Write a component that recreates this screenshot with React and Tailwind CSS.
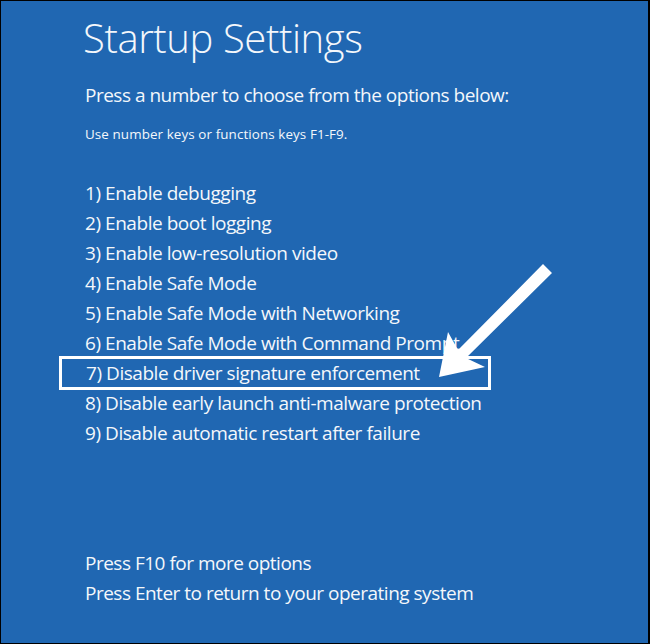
export default function App() {
  const items = [
    "1) Enable debugging",
    "2) Enable boot logging",
    "3) Enable low-resolution video",
    "4) Enable Safe Mode",
    "5) Enable Safe Mode with Networking",
    "6) Enable Safe Mode with Command Prompt",
    "7) Disable driver signature enforcement",
    "8) Disable early launch anti-malware protection",
    "9) Disable automatic restart after failure",
  ];
  return (
    <div
      className="relative w-[650px] h-[644px] bg-[#2067b2] border border-black border-r-2 text-[#f4f7fb] overflow-hidden"
      style={{ fontFamily: '"Open Sans", "Noto Sans", sans-serif' }}
    >
      <div className="flex flex-col pl-[84px]">
        <div className="mt-[13px] ml-[-2px] text-[40px] leading-[48px] font-light tracking-[-0.4px]">Startup Settings</div>
        <div className="mt-[18px] text-[19px] leading-[30px] tracking-[-0.5px]">Press a number to choose from the options below:</div>
        <div className="mt-[14px] text-[13.4px] leading-[20px] tracking-[0.1px]">Use number keys or functions keys F1-F9.</div>
        <div className="mt-[34px] flex flex-col text-[19px] tracking-[-0.45px]">
          {items.map((t, i) =>
            i === 6 ? (
              <div
                key={i}
                className="ml-[-26px] w-[432px] border-[3px] border-white pl-[24px] leading-[28px] -my-[2px]"
              >
                {t}
              </div>
            ) : (
              <div key={i} className="leading-[30px]">{t}</div>
            )
          )}
        </div>
        <div className="mt-[100px] flex flex-col text-[19px] tracking-[-0.5px]">
          <div className="leading-[30px]">Press F10 for more options</div>
          <div className="leading-[30px]">Press Enter to return to your operating system</div>
        </div>
      </div>
      <svg className="absolute left-[-1px] top-[-1px]" width="650" height="644" viewBox="0 0 650 644">
        <polygon
          points="439,377 448,332 458,350 543,264 552,273 466,358 485,367"
          fill="#ffffff"
        />
      </svg>
    </div>
  );
}
